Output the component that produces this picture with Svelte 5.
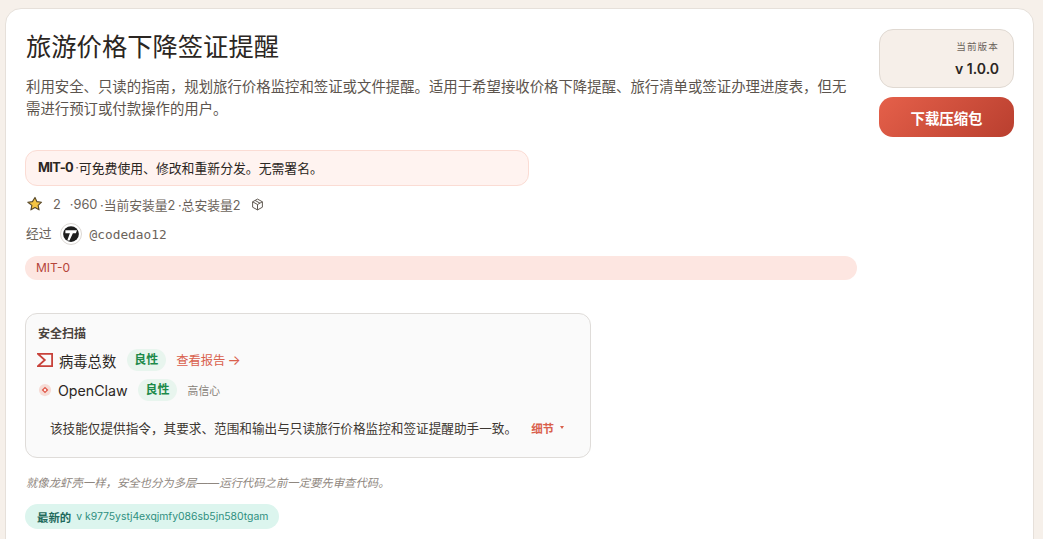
<script>
    const description =
        "利用安全、只读的指南，规划旅行价格监控和签证或文件提醒。适用于希望接收价格下降提醒、旅行清单或签证办理进度表，但无需进行预订或付款操作的用户。";
</script>

<div class="page">
    <section class="card">
        <div class="top">
            <div class="main">
                <h1>旅游价格下降签证提醒</h1>
                <p class="desc">{description}</p>

                <div class="license-note">
                    <strong>MIT-0</strong><span class="sep">·</span>可免费使用、修改和重新分发。无需署名。
                </div>

                <div class="stats">
                    <svg class="star" viewBox="0 0 24 24" width="16" height="16">
                        <path
                            d="M12 2.2l2.9 6.3 6.9.8-5.1 4.7 1.4 6.8-6.1-3.4-6.1 3.4 1.4-6.8L1.300 9.300l6.900-.8z"
                            fill="#f5c542"
                            stroke="#5a4a2a"
                            stroke-width="1.700"
                            stroke-linejoin="round"
                        />
                    </svg>
                    <span class="stat-num">2</span>
                    <span class="stat">·960</span>
                    <span class="stat">·当前安装量2</span>
                    <span class="stat">·总安装量2</span>
                    <svg class="box" viewBox="0 0 24 24" width="13" height="13" fill="none" stroke="#5c544d" stroke-width="1.800" stroke-linejoin="round">
                        <path d="M12 2l9 5v10l-9 5-9-5V7z" />
                        <path d="M3 7l9 5 9-5M12 12v10M7.500 4.500l9 5" />
                    </svg>
                </div>

                <div class="byline">
                    <span class="by">经过</span>
                    <span class="avatar">
                        <svg viewBox="0 0 24 24" width="18" height="18">
                            <circle cx="12" cy="12" r="10.500" fill="#1d1d1d" />
                            <path d="M4.500 7h15.500l-1.500 4h-4l-4.500 9.500h-3l3.500-9.500H4.500z" fill="#fff" />
                        </svg>
                    </span>
                    <span class="handle">@codedao12</span>
                </div>

                <div class="license-bar">MIT-0</div>

                <div class="scan">
                    <div class="scan-title">安全扫描</div>
                    <div class="scan-row">
                        <svg class="vt" viewBox="0 0 16 14" width="16" height="14" fill="none" stroke="#c8423b" stroke-width="1.800">
                            <path d="M1 .9h14.100v12.200H1l6.800-6.100z" />
                        </svg>
                        <span class="scan-name">病毒总数</span>
                        <span class="pill">良性</span>
                        <span class="report">查看报告<span class="arrow">→</span></span>
                    </div>
                    <div class="scan-row second">
                        <svg class="claw" viewBox="0 0 16 16" width="14" height="14">
                            <circle cx="8" cy="8" r="7" fill="#f6dcd6" />
                            <path d="M8 4.200L11.800 8 8 11.800 4.200 8z" fill="#e0584a" />
                            <circle cx="8" cy="8" r="1.400" fill="#fbeeea" />
                        </svg>
                        <span class="scan-name latin">OpenClaw</span>
                        <span class="pill">良性</span>
                        <span class="confidence">高信心</span>
                    </div>
                    <div class="scan-summary">
                        <span>该技能仅提供指令，其要求、范围和输出与只读旅行价格监控和签证提醒助手一致。</span>
                        <span class="details">细节<i class="caret"></i></span>
                    </div>
                </div>

                <p class="footnote">就像龙虾壳一样，安全也分为多层——运行代码之前一定要先审查代码。</p>

                <div class="latest">
                    <strong>最新的</strong>
                    <span>v k9775ystj4exqjmfy086sb5jn580tgam</span>
                </div>
            </div>

            <aside class="side">
                <div class="version">
                    <span class="version-label">当前版本</span>
                    <span class="version-num">v 1.0.0</span>
                </div>
                <button class="download">下载压缩包</button>
            </aside>
        </div>
    </section>
</div>

<style>
    :global(body) {
        background: #f6f0ea;
    }

    .page {
        height: 539px;
        overflow: hidden;
        padding: 8px 9px 0 5px;
        box-sizing: border-box;
        font-family: "Inter", "Noto Sans CJK SC", sans-serif;
        color: #2b2622;
    }

    .card {
        background: #fff;
        border: 1px solid #e6e0da;
        border-radius: 16px;
        height: 600px;
        padding: 19px 19px 0 19px;
        box-sizing: border-box;
    }

    .top {
        display: flex;
        gap: 22px;
    }

    .main {
        flex: 1;
        min-width: 0;
    }

    h1 {
        margin: 1px 0 0 1px;
        font-size: 25.3px;
        line-height: 36px;
        font-weight: 400;
        color: #2b2622;
    }

    .desc {
        margin: 11px 0 0 1px;
        font-size: 14.4px;
        line-height: 22px;
        color: #5c544d;
    }

    .license-note {
        width: 504px;
        height: 36px;
        margin-top: 30px;
        padding: 0 12px 1px;
        box-sizing: border-box;
        display: flex;
        align-items: center;
        background: #fff3f0;
        border: 1px solid #fbdcd4;
        border-radius: 12px;
        font-size: 12.85px;
    }

    .license-note strong {
        font-weight: 700;
        letter-spacing: -0.6px;
    }

    .sep {
        margin: 0 0 0 2px;
        color: #7a7068;
    }

    .stats {
        display: flex;
        align-items: center;
        margin-top: 9px;
        height: 18px;
        font-size: 12.8px;
        color: #6b635b;
    }

    .star {
        margin-left: 2px;
    }

    .stat-num {
        margin: 0 9px 0 10px;
    }

    .stat {
        margin-right: 2.500px;
    }

    .box {
        margin-left: 8px;
    }

    .byline {
        display: flex;
        align-items: center;
        gap: 8px;
        margin-top: 10px;
        padding-left: 1px;
        font-size: 12.8px;
        color: #6b635b;
    }

    .by {
        margin-bottom: 3px;
    }

    .avatar {
        width: 22px;
        height: 22px;
        box-sizing: border-box;
        border: 1px solid #dcd8d4;
        border-radius: 50%;
        display: flex;
        align-items: center;
        justify-content: center;
    }

    .handle {
        font-family: "DejaVu Sans Mono", monospace;
        font-size: 12.8px;
    }

    .license-bar {
        height: 24px;
        margin-top: 11px;
        padding: 0 11px 1px;
        box-sizing: border-box;
        display: flex;
        align-items: center;
        background: #fde6e1;
        border-radius: 12px;
        font-size: 12px;
        color: #b5443a;
    }

    .scan {
        width: 566px;
        height: 145px;
        margin-top: 33px;
        padding: 12px 12px;
        box-sizing: border-box;
        background: #fafafa;
        border: 1px solid #dfdcd9;
        border-radius: 12px;
    }

    .scan-title {
        font-size: 12px;
        line-height: 16px;
        font-weight: 600;
        color: #4a433d;
    }

    .scan-row {
        display: flex;
        align-items: center;
        height: 24px;
        margin-top: 6px;
    }

    .scan-row.second {
        margin-top: 6px;
    }

    .vt {
        margin-left: -1px;
    }

    .scan-name {
        margin-left: 6px;
        font-size: 14.3px;
        color: #2b2622;
    }

    .latin {
        font-size: 14.2px;
        margin-left: 6px;
    }

    .pill {
        margin-left: 10.500px;
        padding: 0 7.500px;
        line-height: 22px;
        border-radius: 11px;
        background: #e8f5ee;
        color: #1d8a4a;
        font-size: 12px;
        font-weight: 700;
    }

    .report {
        margin-left: 10.500px;
        font-size: 12.3px;
        color: #d9604c;
    }

    .arrow {
        margin-left: 2px;
        font-size: 14px;
    }

    .confidence {
        margin-left: 10.500px;
        font-size: 10.800px;
        color: #857d76;
    }

    .scan-summary {
        display: flex;
        align-items: center;
        margin-top: 16px;
        padding-left: 12px;
        font-size: 12.64px;
        color: #3d3731;
    }

    .details {
        display: flex;
        align-items: center;
        margin-left: 14px;
        font-weight: 600;
        font-size: 11.5px;
        color: #d9604c;
    }

    .caret {
        width: 0;
        height: 0;
        margin-left: 6px;
        border: 2.500px solid transparent;
        border-top: 3px solid #d9604c;
        border-bottom: 0;
    }

    .footnote {
        margin: 17px 0 0 1px;
        font-size: 11.36px;
        line-height: 16px;
        font-style: italic;
        color: #8f8780;
    }

    .latest {
        display: inline-flex;
        align-items: center;
        gap: 5px;
        height: 25px;
        margin-top: 13px;
        padding: 0 11px 0 12px;
        background: #dcf5ee;
        border-radius: 13px;
        font-size: 10.4px;
        color: #2f8f7f;
    }

    .latest strong {
        color: #1f6a5c;
        font-size: 11.4px;
        font-weight: 700;
    }

    .side {
        width: 135px;
        flex: none;
        display: flex;
        flex-direction: column;
        gap: 9px;
        padding-top: 1px;
    }

    .version {
        height: 59px;
        padding: 0 14px 2px;
        box-sizing: border-box;
        display: flex;
        flex-direction: column;
        align-items: flex-end;
        justify-content: center;
        gap: 7px;
        background: #f6efe9;
        border: 1px solid #e0d9d2;
        border-radius: 14px;
    }

    .version-label {
        font-size: 9.6px;
        letter-spacing: 1.100px;
        color: #6b635b;
    }

    .version-num {
        font-size: 14px;
        font-weight: 600;
        color: #2b2622;
    }

    .download {
        height: 40px;
        border: 0;
        border-radius: 14px;
        background: linear-gradient(135deg, #e5604a, #b93f2f);
        color: #fff;
        font-family: inherit;
        font-size: 14.4px;
        font-weight: 700;
    }
</style>
